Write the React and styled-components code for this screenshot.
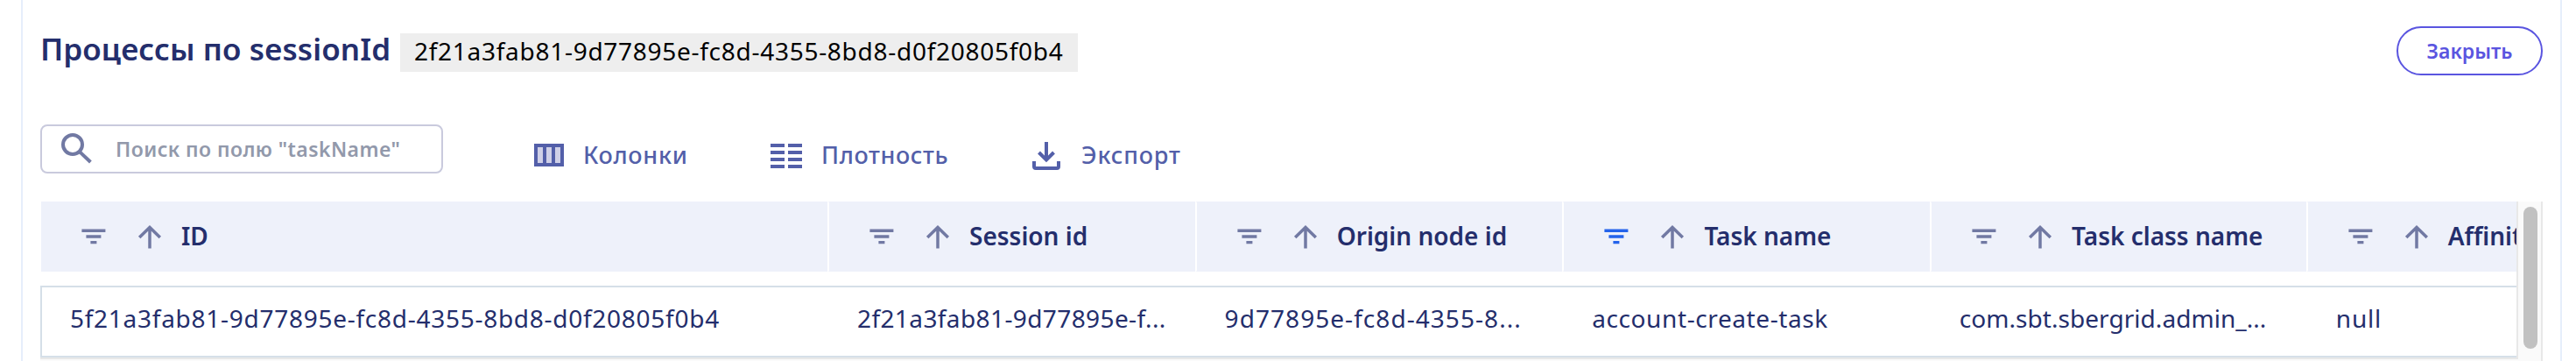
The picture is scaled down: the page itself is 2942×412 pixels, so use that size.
import React from 'react';
import styled, { createGlobalStyle } from 'styled-components';

const Global = createGlobalStyle`
  * { box-sizing: border-box; }
  body { margin: 0; background: #fff; font-family: "Noto Sans", "Open Sans", sans-serif; color: #242e6c; overflow: hidden; }
`;

const Panel = styled.main`
  margin: 0 16px 0 24px;
  height: 412px;
  padding: 0 20px;
  border-left: 2px solid #e6eefb;
  border-right: 2px solid #e6eefb;
  overflow: hidden;
`;

const Header = styled.header`
  display: flex;
  align-items: flex-start;
  padding-top: 30px;
  height: 142px;
`;

const Title = styled.h1`
  margin: 0;
  width: 411px;
  font-size: 35px;
  line-height: 52px;
  font-weight: 600;
  letter-spacing: 0.08px;
  white-space: nowrap;
`;

const SessionTag = styled.span`
  margin-top: 8px;
  width: 774px;
  height: 44px;
  padding-left: 16px;
  background: #eee;
  color: #000;
  font-size: 28px;
  line-height: 41px;
  letter-spacing: 0.72px;
  white-space: nowrap;
`;

const CloseButton = styled.button`
  margin-left: auto;
  width: 167px;
  height: 56px;
  padding: 0 0 1px;
  border: 2px solid #5a55e0;
  border-radius: 28px;
  background: transparent;
  color: #5a55e0;
  font: 600 23px/50px "Noto Sans", sans-serif;
`;

const Toolbar = styled.div`
  display: flex;
  align-items: flex-start;
  height: 88px;
`;

const Search = styled.label`
  display: flex;
  align-items: center;
  width: 460px;
  height: 56px;
  margin-right: 104px;
  padding-left: 21px;
  border: 2px solid #c9cadd;
  border-radius: 8px;
  color: #9299ab;
  font-size: 23px;
  font-weight: 600;
  letter-spacing: 0.42px;
  white-space: nowrap;
  svg { margin-right: 27px; flex: none; }
`;

const Tool = styled.button`
  display: flex;
  align-items: center;
  width: ${p => p.$width}px;
  height: 72px;
  padding: 0;
  border: 0;
  background: none;
  color: #535fa9;
  font: 500 27px/40px "Noto Sans", sans-serif;
  letter-spacing: ${p => p.$track}px;
  white-space: nowrap;
  svg { flex: none; }
`;

const ToolLabel = styled.span`
  padding: 0 0 3px 22px;
`;

const TableFrame = styled.section`
  display: flex;
  width: 2858px;
  height: 182px;
  background: #fafafa;
`;

const Viewport = styled.div`
  width: 2830px;
  height: 180px;
  overflow: hidden;
  background: #fff;
  border-right: 2px solid #e8e8e8;
  border-bottom: 2px solid #e8e8e8;
`;

const HeadRow = styled.div`
  display: grid;
  grid-template-columns: 900px repeat(3, 419.7px) 429.7px 420px;
  width: 3010px;
  height: 80px;
  margin-left: 1px;
  background: #eef1fa;
`;

const HeadCell = styled.div`
  display: flex;
  align-items: center;
  gap: 36px;
  padding-left: 46px;
  border-right: 2px solid #fff;
  border-radius: 2px;
  font-size: 28px;
  font-weight: 600;
  white-space: nowrap;
  svg { flex: none; }
`;

const HeadText = styled.span`
  margin-left: -14px;
  padding-bottom: 3px;
`;

const BodyRow = styled.div`
  display: grid;
  grid-template-columns: 899px repeat(3, 419.6px) 430px 420px;
  width: 3011px;
  height: 82px;
  margin-top: 16px;
  border: 2px solid #d5dfe8;
`;

const Cell = styled.div`
  padding: 0 32px;
  font-size: 28px;
  line-height: 70px;
  letter-spacing: ${p => p.$track}px;
  white-space: nowrap;
`;

const ScrollTrack = styled.div`
  width: 28px;
  height: 182px;
  padding: 6px 4px 0 6px;
  border-right: 2px solid #e8e8e8;
`;

const Thumb = styled.div`
  width: 16px;
  height: 162px;
  border-radius: 8px;
  background: #c1c1c1;
`;

const FilterIcon = ({ color = '#7179a3' }) => (
  <svg width="28" height="28" viewBox="0 0 28 28" fill={color}>
    <path d="M.4 5.6h27v3.4H.4zM5.4 12.3h17v3.4h-17zM10.4 19h7v3.2h-7z" />
  </svg>
);

const ArrowIcon = () => (
  <svg width="28" height="28" viewBox="0 0 28 28" fill="none" stroke="#7179a3" strokeWidth="3.5">
    <path d="M14 27.5V3M2.2 15 14 3.4 25.8 15" />
  </svg>
);

const SearchIcon = () => (
  <svg width="36" height="36" viewBox="0 0 36 36" fill="none" stroke="#7179a3" strokeWidth="4">
    <circle cx="14" cy="13" r="11" />
    <path d="M22.4 21.6 34.4 33" />
  </svg>
);

const ColumnsIcon = () => (
  <svg width="34" height="28" viewBox="0 0 34 28">
    <path fill="#535fa9" d="M0 0h34v26H0z" />
    <path fill="#cfd0e7" d="M4 4h6v18H4zM14 4h6v18h-6zM24 4h6v18h-6z" />
  </svg>
);

const DensityIcon = () => (
  <svg width="36" height="28" viewBox="0 0 36 28">
    <path fill="#535fa9" d="M0 0h16v4H0zM20 0h16v4H20zM0 8h16v4H0zM20 8h16v4H20zM0 16h16v4H0zM20 16h16v4H20zM0 24h16v4H0zM20 24h16v4H20z" />
  </svg>
);

const ExportIcon = () => (
  <svg width="34" height="32" viewBox="0 0 34 32" fill="none" stroke="#535fa9" strokeWidth="4">
    <path d="M16 0v20M7.5 12l8.5 8.5 8.5-8.5M2 22v6q0 2 2 2h24q2 0 2-2v-6" />
  </svg>
);

const tools = [
  { label: 'Колонки', Icon: ColumnsIcon, width: 270, track: 0.7 },
  { label: 'Плотность', Icon: DensityIcon, width: 299, track: 0.6 },
  { label: 'Экспорт', Icon: ExportIcon, width: 180, track: 0.85 },
];

const columns = [
  { head: 'ID', value: '5f21a3fab81-9d77895e-fc8d-4355-8bd8-d0f20805f0b4', track: 0.73 },
  { head: 'Session id', value: '2f21a3fab81-9d77895e-f...', track: 0.4 },
  { head: 'Origin node id', value: '9d77895e-fc8d-4355-8...', track: 1.05 },
  { head: 'Task name', value: 'account-create-task', track: 0.6, filtered: true },
  { head: 'Task class name', value: 'com.sbt.sbergrid.admin_...', track: 0.05 },
  { head: 'Affinity', value: 'null', track: 0.8 },
];

export default function App() {
  return (
    <>
      <Global />
      <Panel>
        <Header>
          <Title>Процессы по sessionId</Title>
          <SessionTag>2f21a3fab81-9d77895e-fc8d-4355-8bd8-d0f20805f0b4</SessionTag>
          <CloseButton>Закрыть</CloseButton>
        </Header>
        <Toolbar>
          <Search>
            <SearchIcon />
            Поиск по полю "taskName"
          </Search>
          {tools.map(({ label, Icon, width, track }) => (
            <Tool key={label} $width={width} $track={track}>
              <Icon />
              <ToolLabel>{label}</ToolLabel>
            </Tool>
          ))}
        </Toolbar>
        <TableFrame>
          <Viewport>
            <HeadRow>
              {columns.map(({ head, filtered }) => (
                <HeadCell key={head}>
                  <FilterIcon color={filtered ? '#2463eb' : undefined} />
                  <ArrowIcon />
                  <HeadText>{head}</HeadText>
                </HeadCell>
              ))}
            </HeadRow>
            <BodyRow>
              {columns.map(({ head, value, track }) => (
                <Cell key={head} $track={track}>{value}</Cell>
              ))}
            </BodyRow>
          </Viewport>
          <ScrollTrack><Thumb /></ScrollTrack>
        </TableFrame>
      </Panel>
    </>
  );
}
